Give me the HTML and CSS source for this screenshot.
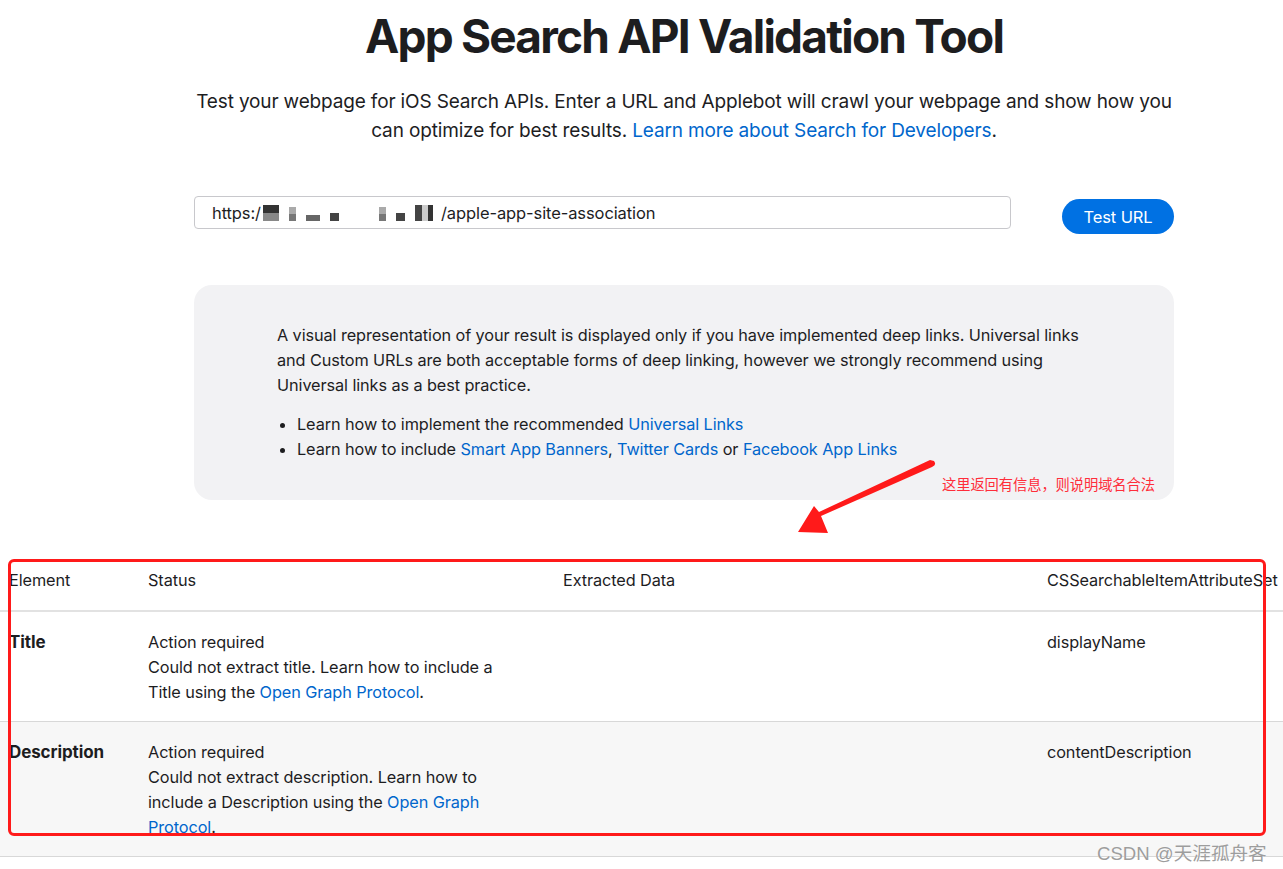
FILE: index.html
```html
<html>
    <head>
        <meta charset="utf-8">
        <title>App Search API Validation Tool</title>
        <link rel="stylesheet" href="styles.css">
    </head>
    <body>
        <div class="page">
            <div class="column">
                <h1 class="title">App Search API Validation Tool</h1>
                <p class="intro">Test your webpage for iOS Search APIs. Enter a URL and Applebot will crawl your webpage and show how you can optimize for best results. <a href="#">Learn more about Search for Developers</a>.</p>

                <form class="url-form">
                    <div class="url-input">
                        <span>https:/</span><span class="mosaic">
                            <i class="m1"></i><i class="m2"></i><i class="m3"></i><i class="m4"></i><i class="gap"></i><i class="m2"></i><i class="m4"></i><i class="m5"></i>
                        </span><span>/apple-app-site-association</span>
                    </div>
                    <button class="button" type="button">Test URL</button>
                </form>

                <div class="notice">
                    <p>A visual representation of your result is displayed only if you have implemented deep links. Universal links and Custom URLs are both acceptable forms of deep linking, however we strongly recommend using Universal links as a best practice.</p>
                    <ul>
                        <li>Learn how to implement the recommended <a href="#">Universal Links</a></li>
                        <li>Learn how to include <a href="#">Smart App Banners</a>, <a href="#">Twitter Cards</a> or <a href="#">Facebook App Links</a></li>
                    </ul>
                    <span class="note">这里返回有信息，则说明域名合法</span>
                </div>
            </div>

            <div class="results">
                <div class="row head">
                    <div>Element</div>
                    <div>Status</div>
                    <div>Extracted Data</div>
                    <div class="nowrap">CSSearchableItemAttributeSet</div>
                </div>
                <div class="row">
                    <div class="element">Title</div>
                    <div class="status">Action required<br>Could not extract title. Learn how to include a Title using the <a href="#">Open Graph Protocol</a>.</div>
                    <div></div>
                    <div>displayName</div>
                </div>
                <div class="row alt">
                    <div class="element">Description</div>
                    <div class="status">Action required<br>Could not extract description. Learn how to include a Description using the <a href="#">Open Graph Protocol</a>.</div>
                    <div></div>
                    <div>contentDescription</div>
                </div>
            </div>

            <div class="red-box"></div>
            <svg class="arrow" width="150" height="85" viewBox="0 0 150 85">
                <path d="M143 5 Q146 9 141 11 L30 60 L37 77 L7 76 L23 50 L28 56 L139 4 Z" fill="#ff1a1a"/>
            </svg>
            <div class="watermark">CSDN @天涯孤舟客</div>
        </div>
    </body>
</html>
```

FILE: styles.css
```css
body {
    margin: 0;
    overflow: hidden;
    background: #fff;
    color: #1d1d1f;
    font-family: Inter, "Noto Sans", sans-serif;
}
a {
    color: #0066cc;
    text-decoration: none;
}
.page {
    position: relative;
    height: 869px;
    overflow: hidden;
}
.column {
    width: 980px;
    margin-left: 194px;
}
.title {
    margin: 0;
    padding-top: 8px;
    font-size: 46px;
    line-height: 56px;
    font-weight: 700;
    letter-spacing: -1.8px;
    text-align: center;
}
.intro {
    margin: 23px 0 0;
    font-size: 19px;
    line-height: 29px;
    letter-spacing: -0.15px;
    text-align: center;
}
.url-form {
    display: flex;
    align-items: flex-start;
    margin: 51px 0 0;
}
.url-input {
    box-sizing: border-box;
    width: 817px;
    height: 33px;
    padding: 6px 17px;
    border: 1px solid #c8c8cc;
    border-radius: 4px;
    font-size: 16.5px;
    line-height: 20px;
    letter-spacing: -0.1px;
    display: flex;
    align-items: center;
}
.mosaic {
    display: inline-flex;
    align-items: flex-end;
    height: 16px;
    margin: 0 2px;
}
.mosaic i {
    display: inline-block;
    width: 9px;
    height: 9px;
    margin-right: 10px;
    background: #555;
}
.mosaic .m1 { height: 16px; background: linear-gradient(#333 50%, #888 50%); width: 16px; }
.mosaic .m2 { height: 14px; background: linear-gradient(#aaa 50%, #777 50%); width: 7px; }
.mosaic .m3 { width: 14px; height: 6px; background: #666; }
.mosaic .m4 { width: 9px; height: 8px; background: #444; }
.mosaic .m5 { width: 18px; height: 16px; background: linear-gradient(90deg, #444 40%, #ccc 40%, #ccc 70%, #333 70%); margin-right: 6px; }
.mosaic .gap { width: 20px; background: none; }
.button {
    margin: 3px 0 0 51px;
    width: 112px;
    height: 35px;
    border: none;
    border-radius: 18px;
    background-color: #0071e3;
    color: #fff;
    font-family: Inter, "Noto Sans", sans-serif;
    font-size: 16.5px;
    letter-spacing: -0.1px;
    cursor: pointer;
}
.notice {
    position: relative;
    box-sizing: border-box;
    height: 215px;
    margin-top: 51px;
    padding: 38px 88px 0 83px;
    background: #f2f2f4;
    border-radius: 18px;
    font-size: 16.3px;
    line-height: 25px;
    letter-spacing: -0.1px;
}
.notice p {
    margin: 0;
}
.notice ul {
    margin: 14px 0 0;
    padding-left: 20px;
}
.note {
    position: absolute;
    left: 748px;
    top: 190px;
    color: #ff2d3a;
    font-family: "Noto Sans CJK SC", sans-serif;
    font-size: 14.3px;
    line-height: 18px;
}
.results {
    margin-top: 50px;
    font-size: 16.3px;
    line-height: 25px;
    letter-spacing: -0.1px;
}
.row {
    display: grid;
    grid-template-columns: 139px 415px 484px 300px;
    padding: 18px 0 16px 9px;
    border-bottom: 1px solid #d8d8d8;
    width: 1340px;
}
.row.head {
    border-bottom-color: #e2e2e2;
    border-bottom-width: 2px;
    padding-bottom: 17px;
}
.row.alt {
    background: #f7f7f7;
}
.element {
    font-weight: 700;
    font-size: 17px;
}
.status {
    width: 352px;
}
.nowrap {
    white-space: nowrap;
}
.red-box {
    position: absolute;
    left: 8px;
    top: 559px;
    width: 1252px;
    height: 271px;
    border: 3px solid #ff1a1a;
    border-radius: 6px;
}
.arrow {
    position: absolute;
    left: 791px;
    top: 456px;
}
.watermark {
    position: absolute;
    left: 1097px;
    top: 838px;
    font-family: "Liberation Sans", "Noto Sans CJK SC", sans-serif;
    font-size: 18.6px;
    color: #9d9d9d;
    text-shadow: 0 0 1px #fff;
}
```
